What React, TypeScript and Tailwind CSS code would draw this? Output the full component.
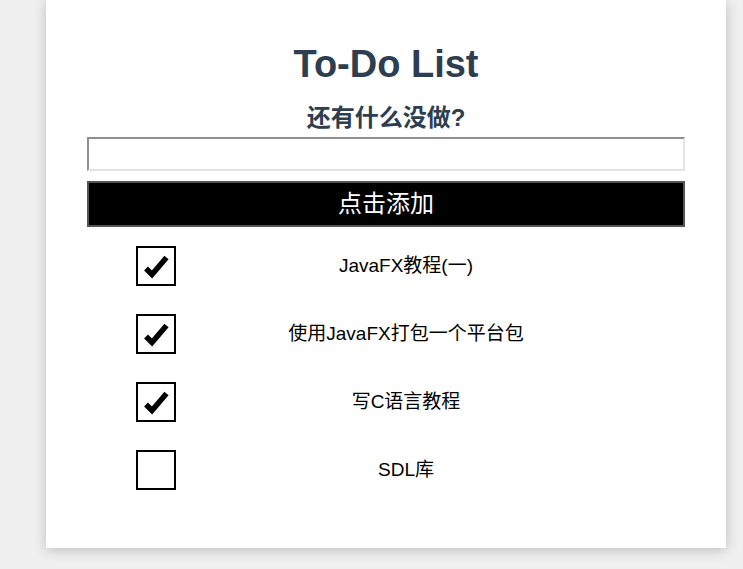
import React, { useState } from 'react';

interface Todo {
  id: number;
  text: string;
  done: boolean;
}

const initialTodos: Todo[] = [
  { id: 1, text: 'JavaFX教程(一)', done: true },
  { id: 2, text: '使用JavaFX打包一个平台包', done: true },
  { id: 3, text: '写C语言教程', done: true },
  { id: 4, text: 'SDL库', done: false },
];

const CheckBox: React.FC<{ checked: boolean; onToggle: () => void }> = ({ checked, onToggle }) => (
  <button
    onClick={onToggle}
    className="w-10 h-10 shrink-0 border-2 border-black bg-white flex items-center justify-center p-0"
  >
    {checked && (
      <svg width="36" height="36" viewBox="0 0 36 36">
        <path d="M8 20.5 L14 26.5 L28.5 9.5" fill="none" stroke="#000" strokeWidth={5.5} strokeLinejoin="miter" />
      </svg>
    )}
  </button>
);

export default function App() {
  const [todos, setTodos] = useState<Todo[]>(initialTodos);
  const [draft, setDraft] = useState('');

  const addTodo = () => {
    if (!draft.trim()) return;
    setTodos([...todos, { id: Date.now(), text: draft.trim(), done: false }]);
    setDraft('');
  };

  const toggle = (id: number) =>
    setTodos(todos.map(t => (t.id === id ? { ...t, done: !t.done } : t)));

  return (
    <div className="min-h-[569px] bg-[#f0f0f0] font-['Liberation_Sans','Noto_Sans_CJK_SC',sans-serif]">
      <div className="ml-[46px] w-[680px] bg-white shadow-[0_2px_12px_rgba(0,0,0,0.22)] px-[41px] pt-[42px] pb-[58px]">
        <h1 className="text-center text-[38px] leading-[44px] font-bold text-[#2c3e50]">To-Do List</h1>
        <h2 className="mt-[18px] text-center text-[24px] leading-[28px] font-bold text-[#2c3e50]">还有什么没做?</h2>
        <input
          value={draft}
          onChange={e => setDraft(e.target.value)}
          className="mt-[5px] block w-full h-[34px] border-2 border-t-[#8f8f8f] border-l-[#8f8f8f] border-b-[#e3e3e3] border-r-[#e3e3e3] outline-none px-2 text-[18px]"
        />
        <button
          onClick={addTodo}
          className="mt-[10px] block w-full h-[46px] bg-black border-2 border-[#555] text-white text-[24px] leading-[28px]"
        >
          点击添加
        </button>
        <ul className="mt-[19px] flex flex-col gap-[28px]">
          {todos.map(todo => (
            <li key={todo.id} className="flex items-center px-[49px] h-10">
              <CheckBox checked={todo.done} onToggle={() => toggle(todo.id)} />
              <span className="flex-1 text-center text-[19px] text-black">{todo.text}</span>
            </li>
          ))}
        </ul>
      </div>
    </div>
  );
}
